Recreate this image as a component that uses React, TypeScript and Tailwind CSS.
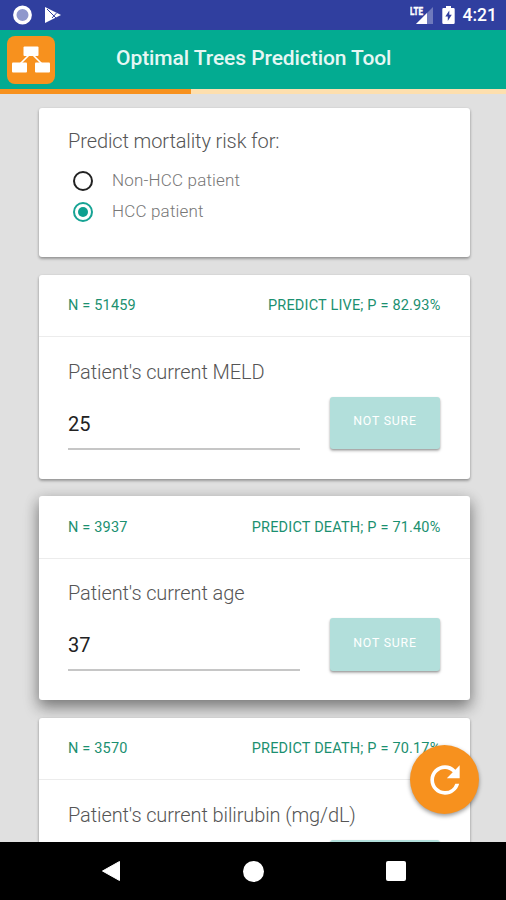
import React from 'react';
import { MdRefresh } from 'react-icons/md';

interface Question {
  count: number;
  prediction: string;
  label: string;
  value: string;
  active?: boolean;
}

const questions: Question[] = [
  { count: 51459, prediction: 'Predict live; P = 82.93%', label: "Patient's current MELD", value: '25' },
  { count: 3937, prediction: 'Predict death; P = 71.40%', label: "Patient's current age", value: '37', active: true },
  { count: 3570, prediction: 'Predict death; P = 70.17%', label: "Patient's current bilirubin (mg/dL)", value: '' },
];

const StatusBar: React.FC = () => (
  <div className="flex h-[30px] shrink-0 items-center justify-between bg-[#303f9f] pl-3 pr-[9px] text-white">
    <div className="flex items-center gap-[11px]">
      <svg width="21" height="20" viewBox="0 0 21 20">
        <circle cx="10.5" cy="10" r="7.7" fill="#8f98cc" stroke="#fff" strokeWidth="3.4" />
      </svg>
      <svg width="18" height="18" viewBox="0 0 18 18">
        <path d="M1 1v16l16-8z" fill="#fff" />
        <path d="M3 3l9 9M8 12l4.500-5" stroke="#303f9f" strokeWidth="1" fill="none" />
        <path d="M2.500 4v10L8 9z" fill="#fff" />
      </svg>
    </div>
    <div className="flex items-center">
      <svg width="24" height="20" viewBox="0 0 24 20">
        <path d="M23 2v17H6z" fill="#6f7abc" />
        <path d="M17 8v11H6z" fill="#fff" />
        <text x="0" y="9.500" fill="#fff" stroke="#fff" strokeWidth="0.4" fontFamily="Roboto, sans-serif" fontWeight="700" fontSize="10" textLength="13" lengthAdjust="spacingAndGlyphs">LTE</text>
      </svg>
      <svg className="ml-[8px]" width="13" height="20" viewBox="0 0 13 20">
        <path d="M4 1h5v2h2.500a1.200 1.200 0 0 1 1.200 1.200v13.600a1.200 1.200 0 0 1-1.200 1.200h-10a1.200 1.200 0 0 1-1.200-1.200V4.200A1.200 1.200 0 0 1 1.500 3H4z" fill="#fff" />
        <path d="M7.300 5.500L3.300 11.500h2.500v4.500l4-6.200H7.300z" fill="#303f9f" />
      </svg>
      <span className="ml-[8px] mt-[2px] text-[17.500px] font-medium leading-none">4:21</span>
    </div>
  </div>
);

const Header: React.FC = () => (
  <header className="shrink-0">
    <div className="flex h-[59px] items-center bg-[#03ab91] pl-[7px]">
      <svg width="48" height="48" viewBox="0 0 48 48">
        <rect width="48" height="48" rx="8" fill="#f7911e" />
        <path d="M24 17L12 29M24 17l12 12" stroke="#fff" strokeWidth="1.600" />
        <rect x="16.500" y="10.500" width="15" height="9.500" rx="1" fill="#fff" />
        <rect x="5" y="26.500" width="15" height="10" rx="1" fill="#fff" />
        <rect x="28" y="26.500" width="15" height="10" rx="1" fill="#fff" />
      </svg>
      <h1 className="ml-[61px] whitespace-nowrap pb-[2px] text-[21px] font-medium tracking-[-0.07px] text-[#e6f7f4]">Optimal Trees Prediction Tool</h1>
    </div>
    <div className="h-[5px] bg-[#fddfae]">
      <div className="h-full w-[191px] bg-[#f7911e]" />
    </div>
  </header>
);

const Radio: React.FC<{ label: string; checked?: boolean }> = ({ label, checked }) => (
  <div className="flex h-[31px] items-center">
    <div className={`ml-[5px] flex size-5 items-center justify-center rounded-full border-2 ${checked ? 'border-[#16a394]' : 'border-[#222]'}`}>
      {checked && <div className="size-[10px] rounded-full bg-[#0d9f8f]" />}
    </div>
    <span className="ml-[19px] text-[17px] font-light tracking-[0.180px] text-[#777]">{label}</span>
  </div>
);

const QuestionCard: React.FC<{ question: Question }> = ({ question }) => (
  <section
    className={`h-[204px] shrink-0 rounded-[3px] bg-white ${
      question.active
        ? 'shadow-[0_8px_16px_rgba(0,0,0,0.3),0_4px_14px_rgba(0,0,0,0.25)]'
        : 'shadow-[0_2px_3px_rgba(0,0,0,0.22),0_1px_3px_rgba(0,0,0,0.2)]'
    }`}
  >
    <div className="flex h-[62.500px] items-center justify-between border-b border-[#ececec] px-[29px] pt-[2px] text-[14.500px] uppercase tracking-[0.180px] text-[#1b9070]">
      <span>N = {question.count}</span>
      <span>{question.prediction}</span>
    </div>
    <div className="pl-[29px] pr-[29.500px] pt-[22.500px]">
      <h2 className="h-[24px] whitespace-nowrap text-[20px] font-light leading-[24px] tracking-[-0.110px] text-[#555]">{question.label}</h2>
      <div className="mt-[13px] flex justify-between">
        <div className="flex h-[53px] w-[232px] items-center border-b-2 border-[#c6c6c6] pt-[3px] text-[20px] text-[#222]">{question.value}</div>
        <button className="h-[52.500px] w-[110px] rounded-[3px] bg-[#b2dfdb] pb-[3px] text-[12.300px] tracking-[0.8px] text-white shadow-[0_2px_3px_rgba(0,0,0,0.25),0_1px_2px_rgba(0,0,0,0.2)]">
          NOT SURE
        </button>
      </div>
    </div>
  </section>
);

const NavBar: React.FC = () => (
  <nav className="flex h-[58px] shrink-0 items-center justify-center gap-[121.500px] bg-black">
    <svg width="21" height="22" viewBox="0 0 21 22">
      <path d="M1.500 11L18.500 1.500v19z" fill="#fff" stroke="#fff" strokeLinejoin="round" />
    </svg>
    <div className="size-[21px] rounded-full bg-white" />
    <div className="size-5 rounded-[2px] bg-white" />
  </nav>
);

const App: React.FC = () => {
  return (
    <div className="relative flex h-[900px] w-[506px] flex-col overflow-hidden bg-[#e0e0e0] font-[Roboto,sans-serif]">
      <StatusBar />
      <Header />

      <main className="flex min-h-0 flex-1 flex-col gap-[17.500px] overflow-hidden pl-[39px] pr-[36.500px] pt-[13.500px]">
        <section className="h-[149.500px] shrink-0 rounded-[3px] bg-white px-[29px] pt-[21px] shadow-[0_2px_3px_rgba(0,0,0,0.22),0_1px_3px_rgba(0,0,0,0.2)]">
          <h2 className="mb-[12px] text-[20px] font-light leading-[25px] tracking-[-0.110px] text-[#555]">Predict mortality risk for:</h2>
          <Radio label="Non-HCC patient" />
          <Radio label="HCC patient" checked />
        </section>
        {questions.map((question) => (
          <QuestionCard key={question.label} question={question} />
        ))}
      </main>

      <NavBar />

      {/* Floating reset button */}
      <button className="absolute left-[410px] top-[745px] flex size-[69px] items-center justify-center rounded-full bg-[#f7911e] text-white shadow-[0_2px_4px_rgba(0,0,0,0.4)]">
        <MdRefresh size={44} />
      </button>
    </div>
  );
};

export default App;
